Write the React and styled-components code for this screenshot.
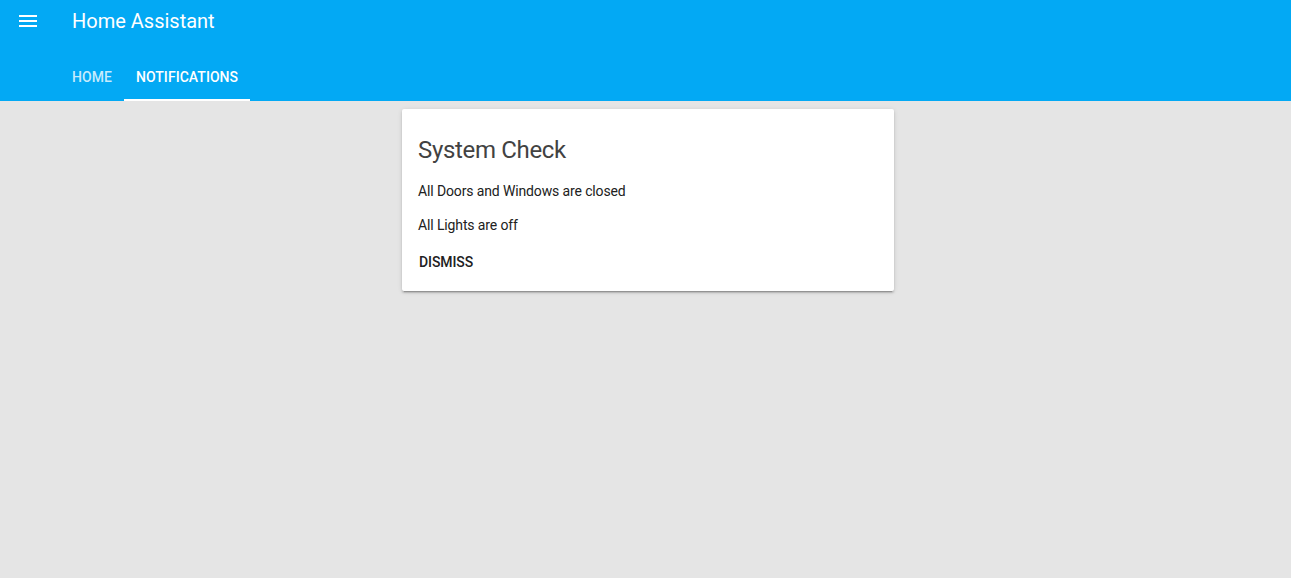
import styled, { createGlobalStyle } from 'styled-components';

const GlobalStyle = createGlobalStyle`
	html, body {
		margin: 0;
		padding: 0;
		background: #e5e5e5;
		font-family: Roboto, "Noto Sans", sans-serif;
	}
`;

const MenuIcon = () => (
	<svg width="24" height="24" viewBox="0 0 24 24">
		<path fill="#ffffff" d="M3 18h18v-2H3v2zm0-5h18v-2H3v2zm0-7v2h18V6H3z" />
	</svg>
);

const notifications = [
	'All Doors and Windows are closed',
	'All Lights are off',
];

const App = () => {
	return (
		<Page>
			<GlobalStyle />
			<Header>
				<Toolbar>
					<MenuButton><MenuIcon /></MenuButton>
					<Title>Home Assistant</Title>
				</Toolbar>
				<Tabs>
					<Tab>HOME</Tab>
					<Tab active>NOTIFICATIONS</Tab>
				</Tabs>
			</Header>
			<Content>
				<Card>
					<CardTitle>System Check</CardTitle>
					{notifications.map(n => <Line key={n}>{n}</Line>)}
					<Dismiss>DISMISS</Dismiss>
				</Card>
			</Content>
		</Page>
	);
};

const Page = styled.div`
	min-height: 578px;
	background: #e5e5e5;
`;

const Header = styled.header`
	background: #03a9f4;
	color: #ffffff;
	height: 101px;
	display: flex;
	flex-direction: column;
`;

const Toolbar = styled.div`
	height: 42px;
	display: flex;
	align-items: center;
	padding-left: 16px;
`;

const MenuButton = styled.div`
	width: 24px;
	height: 24px;
	display: flex;
	margin-right: 32px;
`;

const Title = styled.div`
	font-size: 20px;
	font-weight: 400;
`;

const Tabs = styled.div`
	display: flex;
	margin-top: 11px;
	padding-left: 60px;
`;

const Tab = styled.div`
	height: 48px;
	box-sizing: border-box;
	padding: 2px 12px 0;
	display: flex;
	align-items: center;
	font-size: 14px;
	font-weight: 500;
	letter-spacing: 0.05px;
	color: ${p => p.active ? '#ffffff' : 'rgba(255,255,255,0.78)'};
	border-bottom: 2px solid ${p => p.active ? '#ffffff' : 'transparent'};
`;

const Content = styled.div`
	display: flex;
	justify-content: center;
	padding: 8px 0 0 5px;
`;

const Card = styled.div`
	width: 492px;
	box-sizing: border-box;
	background: #ffffff;
	border-radius: 2px;
	box-shadow: 0 2px 2px 0 rgba(0,0,0,0.14), 0 1px 5px 0 rgba(0,0,0,0.12), 0 3px 1px -2px rgba(0,0,0,0.2);
	padding: 25px 16px 19px;
`;

const CardTitle = styled.div`
	font-size: 24px;
	line-height: 32px;
	letter-spacing: -0.33px;
	color: #424242;
	margin-bottom: 15px;
`;

const Line = styled.div`
	font-size: 14px;
	line-height: 20px;
	letter-spacing: -0.13px;
	color: #212121;
	margin-bottom: 14px;
`;

const Dismiss = styled.div`
	font-size: 14px;
	font-weight: 500;
	line-height: 20px;
	letter-spacing: -0.1px;
	color: #212121;
	padding-left: 1px;
	margin-top: 17px;
`;

export default App;
